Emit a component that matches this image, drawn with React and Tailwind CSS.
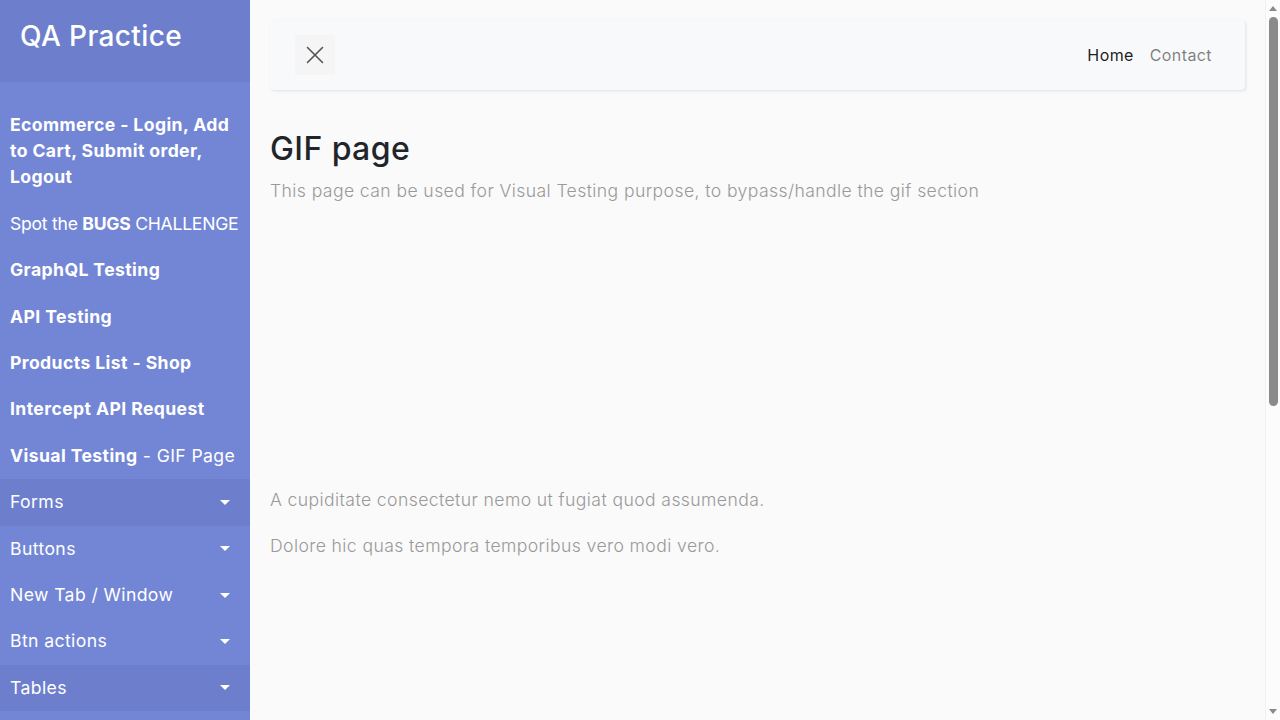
import React from "react";

const font = { fontFamily: "Inter, 'Noto Sans', sans-serif" };

const links = [
  { lines: ["Ecommerce - Login, Add", "to Cart, Submit order,", "Logout"] },
  { pre: "Spot the ", bold: "BUGS", rest: " CHALLENGE", tight: true },
  { bold: "GraphQL Testing" },
  { bold: "API Testing" },
  { bold: "Products List - Shop" },
  { bold: "Intercept API Request" },
  { bold: "Visual Testing", rest: " - GIF Page" },
];

const dropdowns = [
  { label: "Forms", dark: true },
  { label: "Buttons" },
  { label: "New Tab / Window" },
  { label: "Btn actions" },
  { label: "Tables", dark: true },
  { label: "Iframes" },
  { label: "Alerts" },
  { label: "Drag and Drop" },
  { label: "Pagination" },
];

const Caret = () => (
  <span className="mr-[10px] h-0 w-0 border-x-[5px] border-t-[5px] border-x-transparent border-t-white" />
);

const Sidebar = () => {
  return (
    <nav className="w-[250px] shrink-0 bg-[#7386D5] text-white">
      <div className="bg-[#6d7fcc] p-5">
        <h3 className="mb-2 text-[28px] font-medium leading-[1.2]">QA Practice</h3>
      </div>
      <ul className="py-5">
        {links.map((l, i) => (
          <li key={i}>
            <a
              className={
                l.tight
                  ? "block whitespace-nowrap p-[10px] text-[17.6px] leading-[1.5] tracking-[-0.015em]"
                  : "block whitespace-nowrap p-[10px] text-[17.6px] leading-[1.5]"
              }
            >
              {l.lines ? (
                <b className="font-bold">
                  {l.lines.map((t, j) => (
                    <span key={j} className="block">
                      {t}
                    </span>
                  ))}
                </b>
              ) : (
                <>
                  {l.pre}
                  <b className="font-bold">{l.bold}</b>
                  {l.rest}
                </>
              )}
            </a>
          </li>
        ))}
        {dropdowns.map((d, i) => (
          <li key={i} className={d.dark ? "bg-[#6d7fcc]" : ""}>
            <a className="flex items-center justify-between p-[10px] text-[17.6px] leading-[1.5]">
              {d.label}
              <Caret />
            </a>
          </li>
        ))}
      </ul>
    </nav>
  );
};

// page scrollbar as it shows in the screenshot
const Scrollbar = () => (
  <div className="flex h-screen w-[15px] shrink-0 flex-col items-center border-l border-[#f0f0f0] bg-[#fcfcfc]">
    <span className="mt-[6px] h-0 w-0 border-x-[4px] border-b-[5px] border-x-transparent border-b-[#8a8a8a]" />
    <div className="mt-[6px] h-[389px] w-[9px] rounded-full bg-[#8a8a8a]" />
    <div className="flex-1" />
    <span className="mb-[6px] h-0 w-0 border-x-[4px] border-t-[5px] border-x-transparent border-t-[#8a8a8a]" />
  </div>
);

const App = () => {
  return (
    <div className="flex min-h-screen bg-[#fafafa] tracking-[0.025em]" style={font}>
      <Sidebar />
      <div className="min-w-0 flex-1 p-5">
        <div className="mb-10 flex items-center justify-between rounded-[4px] bg-[#f8f9fa] px-[25px] py-[15px] shadow-[1px_1px_3px_rgba(0,0,0,0.1)]">
          <button className="flex h-10 w-10 items-center justify-center bg-[#f5f5f5]">
            <svg width="18" height="18" viewBox="0 0 18 18" fill="none" stroke="#555" strokeWidth="1.6" strokeLinecap="round">
              <line x1="1.5" y1="1.5" x2="16.5" y2="16.5" />
              <line x1="16.5" y1="1.5" x2="1.5" y2="16.5" />
            </svg>
          </button>
          <ul className="flex text-[16px] leading-[1.5]">
            <li className="px-2 text-black/90">Home</li>
            <li className="px-2 text-black/50">Contact</li>
          </ul>
        </div>
        <h2 className="mb-2 text-[32px] font-medium leading-[1.2] text-[#212529]">GIF page</h2>
        <p className="mb-4 text-[17.6px] font-light leading-[1.7] text-[#999]">
          This page can be used for Visual Testing purpose, to bypass/handle the gif section
        </p>
        <div className="h-[263px]" />
        <p className="mb-4 text-[17.6px] font-light leading-[1.7] text-[#999]">
          A cupiditate consectetur nemo ut fugiat quod assumenda.
        </p>
        <p className="mb-4 text-[17.6px] font-light leading-[1.7] text-[#999]">
          Dolore hic quas tempora temporibus vero modi vero.
        </p>
      </div>
      <Scrollbar />
    </div>
  );
};

export default App;
